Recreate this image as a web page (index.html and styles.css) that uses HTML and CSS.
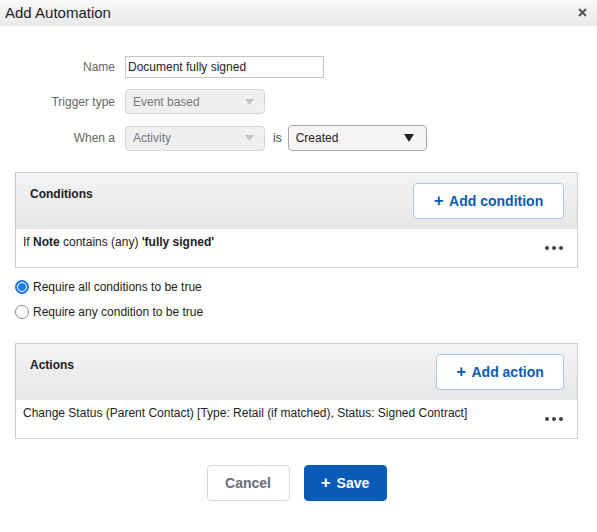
FILE: index.html
```html
<!DOCTYPE html>
<html lang="en">
<head>
    <meta charset="UTF-8">
    <meta name="viewport" content="width=device-width, initial-scale=1.0">
    <title>Add Automation</title>
    <link rel="stylesheet" href="styles.css">
</head>
<body>
    <div class="modal">
        <div class="modal-header">
            <span class="modal-title">Add Automation</span>
            <svg class="modal-close" width="9" height="9" viewBox="0 0 9 9"><path d="M1 1l7 7M8 1L1 8"/></svg>
        </div>

        <div class="modal-body">
            <div class="form">
                <div class="form-row">
                    <label class="form-label">Name</label>
                    <input class="text-input" type="text" value="Document fully signed">
                </div>
                <div class="form-row">
                    <label class="form-label">Trigger type</label>
                    <div class="select select-disabled select-wide">
                        <span>Event based</span>
                        <svg class="caret" width="9" height="6" viewBox="0 0 9 6"><path d="M0 0h9L4.5 6z"/></svg>
                    </div>
                </div>
                <div class="form-row">
                    <label class="form-label">When a</label>
                    <div class="select select-disabled select-wide">
                        <span>Activity</span>
                        <svg class="caret" width="9" height="6" viewBox="0 0 9 6"><path d="M0 0h9L4.5 6z"/></svg>
                    </div>
                    <span class="is-label">is</span>
                    <div class="select select-active">
                        <span>Created</span>
                        <svg class="caret" width="10" height="8" viewBox="0 0 10 8"><path d="M0 0h10L5 8z"/></svg>
                    </div>
                </div>
            </div>

            <div class="panel">
                <div class="panel-header">
                    <span class="panel-title">Conditions</span>
                    <button class="btn btn-outline btn-condition"><span class="plus">+</span> Add condition</button>
                </div>
                <div class="panel-row">
                    <span class="row-text">If <b>Note</b> contains (any) <b>'fully signed'</b></span>
                    <span class="dots"><i></i><i></i><i></i></span>
                </div>
            </div>

            <div class="radio-group">
                <label class="radio-row"><span class="radio checked"></span>Require all conditions to be true</label>
                <label class="radio-row"><span class="radio"></span>Require any condition to be true</label>
            </div>

            <div class="panel">
                <div class="panel-header">
                    <span class="panel-title">Actions</span>
                    <button class="btn btn-outline btn-action"><span class="plus">+</span> Add action</button>
                </div>
                <div class="panel-row">
                    <span class="row-text">Change Status (Parent Contact) [Type: Retail (if matched), Status: Signed Contract]</span>
                    <span class="dots"><i></i><i></i><i></i></span>
                </div>
            </div>

            <div class="modal-footer">
                <button class="btn btn-cancel">Cancel</button>
                <button class="btn btn-save"><span class="plus">+</span> Save</button>
            </div>
        </div>
    </div>
</body>
</html>
```

FILE: styles.css
```css
body {
    margin: 0;
    font-family: "Liberation Sans", Arial, sans-serif;
    font-size: 12px;
    color: #222;
    background: #fff;
}
.modal-header {
    height: 26px;
    padding: 0 10px 0 5px;
    display: flex;
    align-items: center;
    justify-content: space-between;
    background: linear-gradient(#f8f8f8, #e9e9e9);
}
.modal-title {
    font-size: 15px;
    color: #222;
    margin-top: -2px;
}
.modal-close {
    stroke: #555;
    stroke-width: 2;
    margin-top: -1px;
}
.modal-body {
    padding: 30px 19px 0 15px;
}
.form-row {
    display: flex;
    align-items: center;
    margin-bottom: 11px;
}
.form-row:last-child {
    margin-bottom: 0;
}
.form-label {
    width: 100px;
    margin-right: 10px;
    text-align: right;
    color: #666;
    font-size: 12px;
}
.text-input {
    box-sizing: border-box;
    width: 199px;
    height: 22px;
    margin: 0;
    padding: 0 2px;
    border: 1px solid #c4c4c4;
    font-family: inherit;
    font-size: 12px;
    color: #222;
}
.select {
    box-sizing: border-box;
    height: 25px;
    display: flex;
    align-items: center;
    justify-content: space-between;
    padding: 0 10px 0 7px;
    border-radius: 4px;
}
.select-wide {
    width: 140px;
}
.select-disabled {
    background: #efefef;
    border: 1px solid #d6d6d6;
    color: #777;
}
.select-disabled .caret {
    fill: #c3c3c3;
}
.select-active {
    width: 139px;
    height: 26px;
    background: #f4f4f4;
    border: 1px solid #a9a9a9;
    color: #222;
    padding-right: 12px;
}
.select-active .caret {
    fill: #222;
}
.is-label {
    margin: 0 6px 0 8px;
    color: #444;
}
.panel {
    margin-top: 21px;
    border: 1px solid #cfcfcf;
}
.panel-header {
    display: flex;
    justify-content: space-between;
    align-items: flex-start;
    padding: 10px 13px 10px 14px;
    background: linear-gradient(#f3f3f3, #e6e6e6);
    border-left: 1px solid #c4c4c4;
    margin-left: -1px;
}
.panel-title {
    font-weight: bold;
    margin-top: 4px;
}
.btn {
    font-family: "Liberation Sans", Arial, sans-serif;
    font-size: 14px;
    font-weight: bold;
    height: 36px;
    border-radius: 4px;
    cursor: pointer;
}
.btn-outline {
    background: #fff;
    border: 1px solid #a9c8e8;
    color: #0a5bb5;
    padding: 0;
}
.btn-condition {
    width: 151px;
}
.btn-action {
    width: 128px;
}
.plus {
    font-size: 17px;
    font-weight: bold;
    margin-right: 2px;
}
.panel-row {
    height: 38px;
    box-sizing: border-box;
    padding: 6px 14px 0 7px;
    display: flex;
    justify-content: space-between;
    align-items: center;
}
.row-text {
    align-self: flex-start;
}
.dots {
    display: flex;
    gap: 3px;
    margin-top: -6px;
}
.dots i {
    width: 4px;
    height: 4px;
    border-radius: 50%;
    background: #3a4150;
}
.radio-group {
    margin-top: 6px;
}
.radio-row {
    display: flex;
    align-items: center;
    height: 25px;
    color: #222;
}
.radio {
    box-sizing: border-box;
    width: 14px;
    height: 14px;
    border-radius: 50%;
    border: 1px solid #8a8a8a;
    margin-right: 4px;
    background: #fff;
}
.radio.checked {
    border: 1px solid #1a6fe0;
    background: radial-gradient(circle, #1a7cf4 0 3.6px, #fff 4px 4.6px, #1a7cf4 5px);
}
.radio-group + .panel {
    margin-top: 19px;
}
.modal-footer {
    display: flex;
    justify-content: center;
    gap: 14px;
    margin-top: 26px;
}
.btn-cancel {
    width: 83px;
    background: #fff;
    border: 1px solid #d8d8d8;
    color: #666e80;
}
.btn-save {
    width: 83px;
    background: #0a5bb5;
    border: 1px solid #0a5bb5;
    color: #fff;
}
```
